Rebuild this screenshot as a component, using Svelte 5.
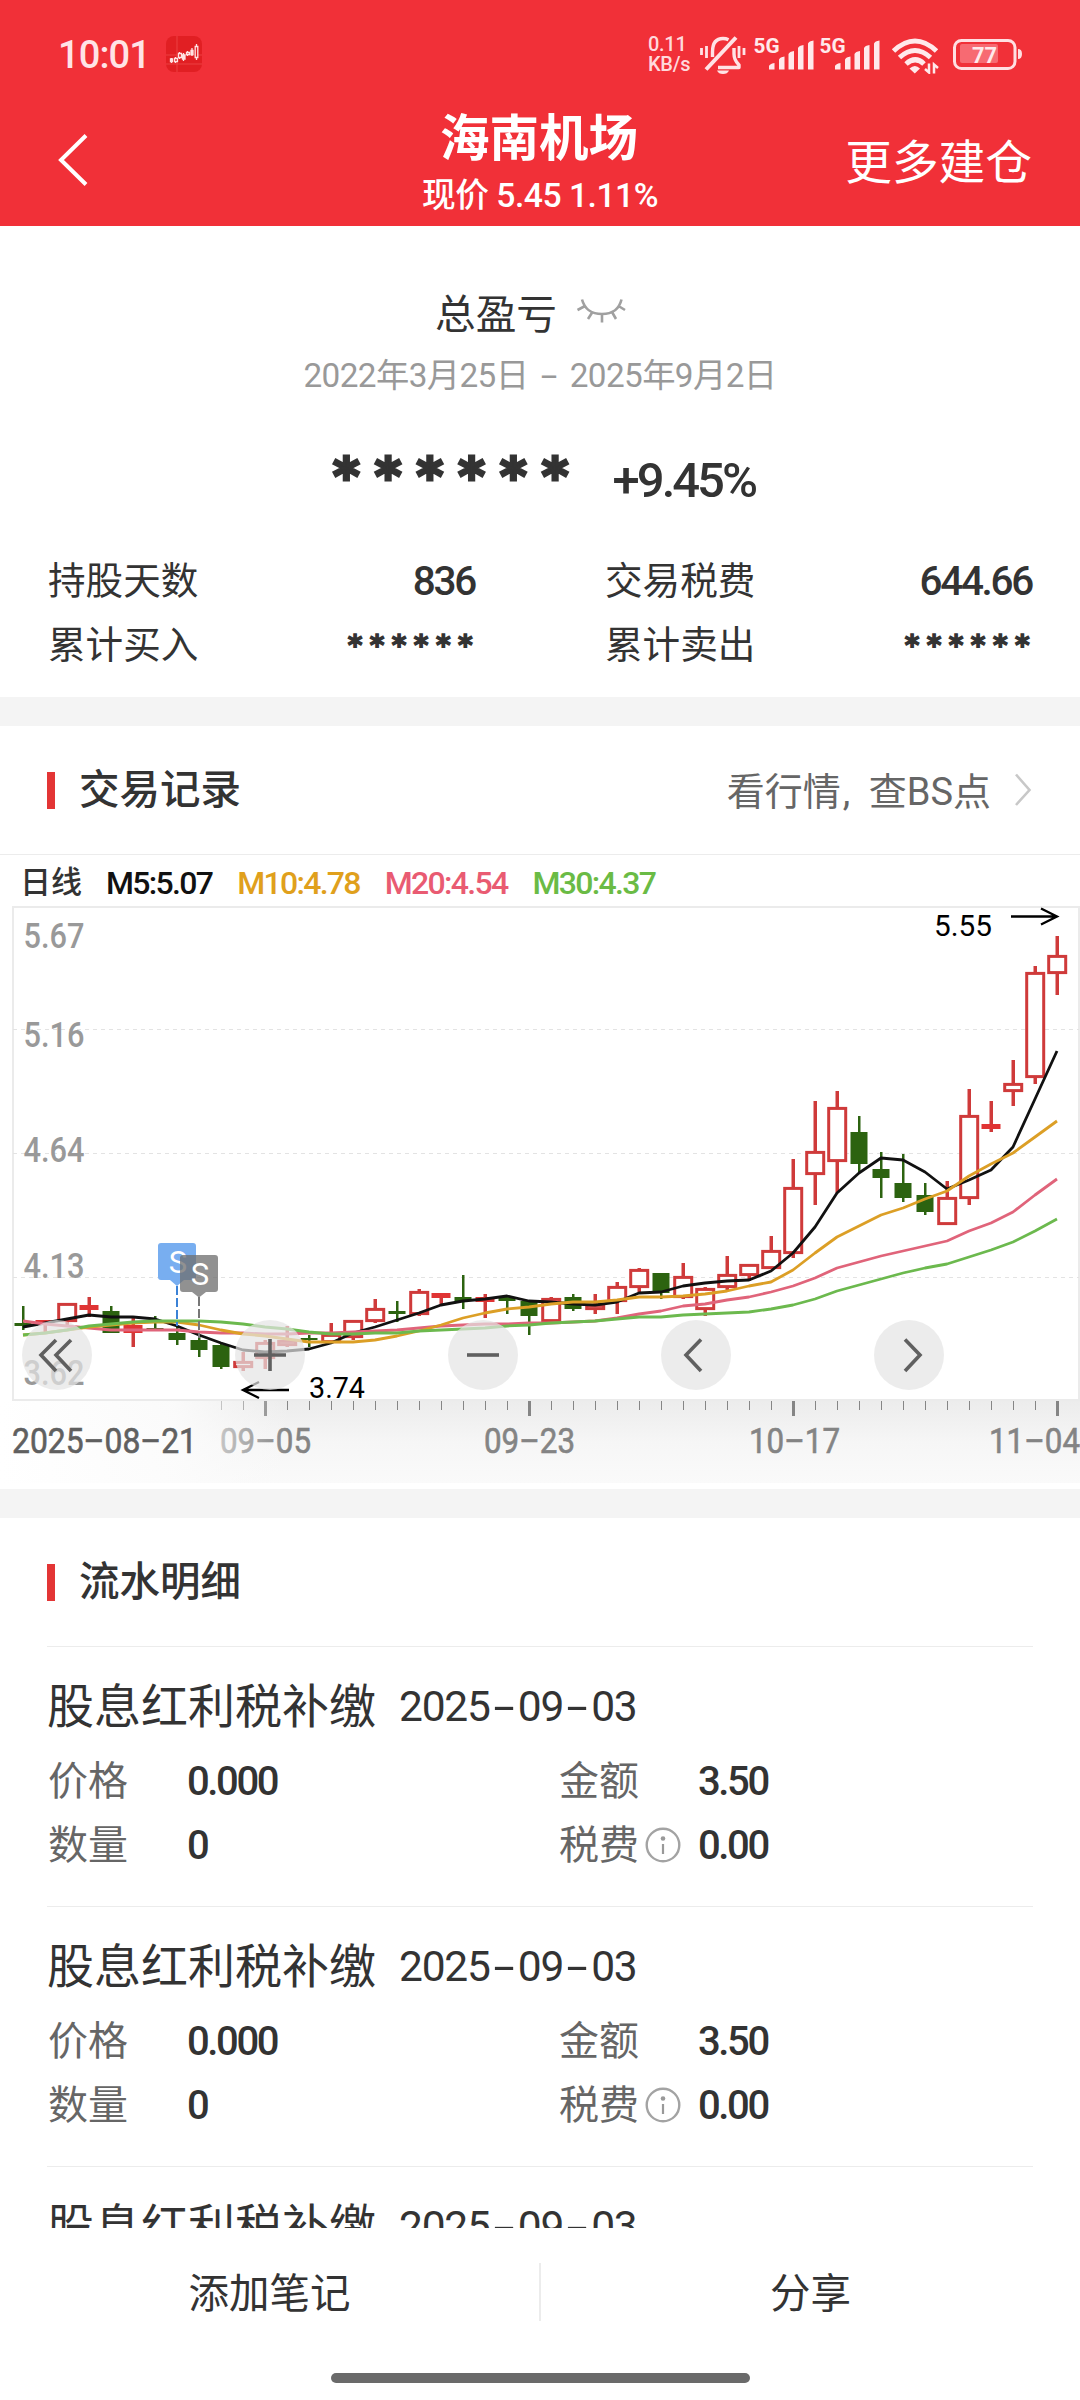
<script>
  const stats = [
    ['持股天数', '836', false],
    ['交易税费', '644.66', false],
    ['累计买入', '******', true],
    ['累计卖出', '******', true]
  ];

  const legend = [
    ['M5:5.07', 'm5'],
    ['M10:4.78', 'm10'],
    ['M20:4.54', 'm20'],
    ['M30:4.37', 'm30']
  ];

  const records = [0, 1, 2].map((id) => ({
    id, name: '股息红利税补缴', date: '2025-09-03', price: '0.000', amount: '3.50', count: '0', fee: '0.00'
  }));

  const STEP = 22;
  const FIRST = 23;
  const at = (i) => FIRST + i * STEP;

  // kind (r hollow rise, f filled rise, g fall), wick top, wick bottom, body top, body bottom
  const candles = [
    ['g', 1306, 1330, 1323, 1326], ['r', 1320, 1332, 1320, 1323], ['r', 1303, 1325, 1303, 1322],
    ['f', 1297, 1317, 1305, 1310], ['g', 1306, 1333, 1311, 1333], ['f', 1318, 1347, 1325, 1333],
    ['g', 1316, 1328, 1328, 1330], ['g', 1327, 1345, 1333, 1340], ['g', 1337, 1357, 1340, 1350],
    ['g', 1343, 1369, 1345, 1367], ['r', 1352, 1371, 1361, 1368], ['r', 1340, 1369, 1342, 1359],
    ['r', 1326, 1347, 1340, 1346], ['g', 1335, 1347, 1338, 1340], ['r', 1323, 1343, 1334, 1343],
    ['r', 1321, 1340, 1320, 1338], ['r', 1299, 1323, 1308, 1322], ['g', 1301, 1322, 1311, 1314],
    ['r', 1289, 1316, 1291, 1315], ['f', 1293, 1305, 1293, 1298], ['g', 1275, 1309, 1297, 1301],
    ['f', 1294, 1318, 1297, 1302], ['g', 1295, 1314, 1297, 1301], ['g', 1300, 1335, 1301, 1316],
    ['r', 1297, 1322, 1298, 1322], ['g', 1294, 1311, 1297, 1309], ['r', 1294, 1314, 1304, 1310],
    ['r', 1282, 1314, 1286, 1302], ['r', 1268, 1292, 1269, 1288], ['g', 1273, 1299, 1273, 1293],
    ['r', 1263, 1299, 1276, 1298], ['r', 1287, 1316, 1288, 1310], ['r', 1256, 1290, 1274, 1288],
    ['r', 1264, 1281, 1264, 1276], ['r', 1236, 1269, 1250, 1269], ['r', 1159, 1258, 1187, 1254],
    ['r', 1101, 1205, 1151, 1175], ['r', 1091, 1193, 1107, 1162], ['g', 1116, 1172, 1132, 1164],
    ['g', 1152, 1198, 1169, 1178], ['g', 1154, 1202, 1183, 1198], ['g', 1183, 1215, 1195, 1212],
    ['r', 1181, 1225, 1197, 1225], ['r', 1089, 1205, 1115, 1199], ['f', 1101, 1132, 1124, 1129],
    ['r', 1060, 1106, 1083, 1092], ['r', 966, 1084, 972, 1078], ['r', 936, 995, 955, 974]
  ];

  const averages = [
    ['m5', [1327, 1323, 1319, 1315, 1317, 1317, 1319, 1326, 1335, 1343, 1350, 1352, 1351, 1349, 1343, 1333, 1327, 1320, 1313, 1305, 1301, 1299, 1296, 1301, 1302, 1304, 1305, 1302, 1293, 1292, 1286, 1283, 1281, 1280, 1271, 1253, 1227, 1193, 1173, 1158, 1160, 1172, 1189, 1180, 1170, 1147, 1099, 1051]],
    ['m20', [1321, 1324, 1326, 1328, 1330, 1330, 1330, 1330, 1332, 1333, 1333, 1334, 1334, 1333, 1333, 1332, 1331, 1330, 1328, 1326, 1325, 1324, 1324, 1323, 1323, 1322, 1321, 1318, 1314, 1311, 1306, 1304, 1300, 1297, 1292, 1286, 1278, 1268, 1262, 1256, 1251, 1246, 1241, 1231, 1223, 1212, 1195, 1179]],
    ['m10', [1335, 1333, 1330, 1327, 1325, 1323, 1322, 1322, 1325, 1330, 1334, 1336, 1339, 1342, 1342, 1342, 1340, 1336, 1331, 1325, 1318, 1313, 1309, 1307, 1304, 1302, 1302, 1300, 1297, 1297, 1296, 1294, 1291, 1286, 1282, 1270, 1253, 1237, 1226, 1215, 1208, 1199, 1191, 1176, 1164, 1153, 1137, 1121]],
    ['m30', [1335, 1333, 1330, 1326, 1324, 1322, 1321, 1321, 1321, 1322, 1324, 1327, 1329, 1332, 1334, 1334, 1333, 1333, 1331, 1330, 1329, 1328, 1326, 1325, 1323, 1322, 1321, 1319, 1317, 1317, 1315, 1314, 1313, 1312, 1309, 1305, 1299, 1291, 1285, 1279, 1273, 1268, 1264, 1257, 1250, 1242, 1231, 1219]]
  ];

  const line = (ys) => ys.map((y, i) => `${at(i)},${y}`).join(' ');

  const scale = [['5.67', 948], ['5.16', 1047], ['4.64', 1162], ['4.13', 1278], ['3.62', 1385]];
  const grid = [1029.5, 1153.5, 1277.5];
  const ticks = Array.from({ length: 39 }, (_, i) => i + 9);
  const dates = [['09–05', 220], ['09–23', 484], ['10–17', 749], ['11–04', 989]];
</script>

{#snippet dashed(text)}{#each text.split('-') as part, i}{#if i}<i class="dash">-</i>{/if}{part}{/each}{/snippet}

{#snippet signal()}
  <svg class="signal" width="62" height="40" viewBox="752 34 62 40">
    <text x="753.5" y="52.5" class="gen" textLength="26" lengthAdjust="spacingAndGlyphs">5G</text>
    <path d="M769 69.500v-3q0-2.500 5.500-3.500v6.500zM779 69.500V59.500q1-2.500 5.500-3v13zM788.500 69.500V54q1-2.500 5.500-3v18.500zM798 69.500V48q1-2.500 5.500-3v24.500zM808 69.500V43.500q1-2.500 5.500-3v29z" />
  </svg>
{/snippet}

<div class="page">
  <header>
    <div class="status">
      <span class="clock">10:01</span>
      <svg class="app" width="36" height="36" viewBox="0 0 36 36">
        <rect width="36" height="36" rx="8" fill="#e11f23" />
        <path d="M0 19h36M11 0v36M0 28h36" stroke="#ef4a4a" stroke-width=".8" />
        <g stroke="#ffe3e3" stroke-width="1.300" fill="none">
          <path d="M5.500 22v5M9.500 21v6M13.500 16v7M17.500 17v8M21.500 15v5M26 12v8M30.500 8v16" />
          <path d="M8.500 22.500h3v3h-3zM12.500 17.500h3v4h-3zM20.500 16.500h3v2h-3zM29.200 10.500h2.600v11h-2.600z" fill="#e11f23" />
          <path d="M4.500 23h2v2.500h-2zM16.500 19h2.500v4h-2.500zM25 14.500h2v4h-2z" fill="#ffe3e3" />
        </g>
      </svg>
      <span class="net"><span>0.11</span><span>KB/s</span></span>
      <svg class="bell" width="50" height="42" viewBox="698 33 50 42">
        <g fill="none" stroke="#ffe3e6" stroke-width="3.400" stroke-linejoin="round">
          <path d="M736 37.500 706 69.500" stroke-width="4" />
          <path d="M712.500 57V52q0-13.500 10.500-13.500 3 0 5.500 1.300" />
          <path d="M734 48v6q0 6 5 11v2.500H718" />
          <path d="M701.500 48v7M706.500 46v12M739 46v12M744 48v7" stroke-width="2.800" />
        </g>
        <path d="M717 70.500h12q-1.500 3.500-6 3.500t-6-3.500z" fill="#ffe3e6" />
      </svg>
      {@render signal()}
      <span class="second">{@render signal()}</span>
      <svg class="wifi" width="50" height="40" viewBox="890 34 50 40">
        <g fill="none" stroke="#ffe9eb" stroke-width="5">
          <path d="M893.500 51q21.500-20 43 0" />
          <path d="M899.500 57.500q15.500-14 31 0" />
          <path d="M906 64q9.500-8.500 18 0" />
        </g>
        <path d="M909.500 68.500q5.500-5 10.500 0l-5.200 5z" fill="#ffe9eb" />
        <path d="M929 63.500v9l-4-3.500M934 73.500v-9l4 3.500" fill="none" stroke="#ffe9eb" stroke-width="2.500" />
      </svg>
      <svg class="battery" width="71" height="34" viewBox="952 37 71 34">
        <rect x="954.500" y="40.500" width="60.500" height="28" rx="7" fill="none" stroke="#ffdfe2" stroke-width="3" />
        <rect x="960" y="44" width="38" height="19" rx="2" fill="#f76a72" />
        <path d="M1018 49q4 0 4 5t-4 5z" fill="#ffdfe2" />
        <text x="972" y="62.500" class="charge" textLength="25" lengthAdjust="spacingAndGlyphs">77</text>
      </svg>
    </div>
    <nav>
      <svg class="back" width="36" height="56" viewBox="55 132 36 56">
        <path d="M86 135.500 61 160l25 24.500" fill="none" stroke="#fff" stroke-width="4" />
      </svg>
      <div class="heading">
        <h1>海南机场</h1>
        <p>现价 5.45 1.11%</p>
      </div>
      <span class="more">更多建仓</span>
    </nav>
  </header>

  <main>
    <section class="summary">
      <div class="total">
        <span>总盈亏</span>
        <svg width="50" height="26" viewBox="577 299 50 26">
          <path d="M582 300.500q4 14.500 20 14.500t19.500-14.500M585 307l-7.500 4M592.500 313l-4.500 7M602 315.500v8M612 313l4 7M618.500 307l6.500 4" fill="none" stroke="#a0a0a0" stroke-width="2.600" />
        </svg>
      </div>
      <p class="range">2022年3月25日 <i class="dash">-</i> 2025年9月2日</p>
      <div class="result">
        <span class="hidden">******</span>
        <span class="rate">+9.45%</span>
      </div>
      <dl class="stats">
        {#each stats as [name, value, masked]}
          <div><dt>{name}</dt><dd class:masked>{value}</dd></div>
        {/each}
      </dl>
    </section>

    <section class="block">
      <div class="head">
        <h2>交易记录</h2>
        <span class="link">看行情<i>,</i>查BS点</span>
        <svg width="18" height="36" viewBox="1015 772 18 36">
          <path d="M1017 774.500 1030.500 790 1017 805" fill="none" stroke="#c8c8c8" stroke-width="2.600" />
        </svg>
      </div>
      <div class="legend">
        <span class="period">日线</span>
        {#each legend as [label, kind]}<span class={kind}>{label}</span>{/each}
      </div>
      <div class="chart">
        <svg width="1080" height="577" viewBox="0 906 1080 577">
          <defs>
            <linearGradient id="axis" x1="0" y1="0" x2="0" y2="1">
              <stop offset="0" stop-color="#ececec" />
              <stop offset=".5" stop-color="#f6f6f6" />
              <stop offset="1" stop-color="#fafafa" />
            </linearGradient>
            <linearGradient id="veil" x1="0" y1="0" x2="1" y2="0">
              <stop offset="0" stop-color="#fff" />
              <stop offset=".6" stop-color="#fcfcfc" stop-opacity=".9" />
              <stop offset="1" stop-color="#fafafa" stop-opacity="0" />
            </linearGradient>
          </defs>
          <rect x="0" y="1401" width="1080" height="82" fill="url(#axis)" />
          <g class="ticks">
            {#each ticks as i}
              {#if (i - 11) % 12 === 0}
                <rect x={at(i) - 1} y="1401" width="3" height="15" />
              {:else}
                <rect x={at(i)} y="1401" width="1" height="9" />
              {/if}
            {/each}
          </g>
          {#each dates as [label, x]}
            <text {x} y="1453" class="day" textLength="91" lengthAdjust="spacingAndGlyphs">{label}</text>
          {/each}
          <rect x="0" y="1401" width="290" height="82" fill="url(#veil)" />
          <text x="12" y="1453" class="day origin" textLength="185" lengthAdjust="spacingAndGlyphs">2025–08–21</text>

          <rect x="13" y="907" width="1066" height="493" class="frame" />
          {#each grid as y}<path d="M13 {y}H1079" class="gridline" />{/each}
          {#each scale as [label, y]}
            <text x="23.500" {y} class="price" textLength="61" lengthAdjust="spacingAndGlyphs">{label}</text>
          {/each}

          {#each candles as [kind, hi, lo, top, bottom], i}
            {@const x = at(i)}
            {#if kind === 'g'}
              <rect x={x - 1} y={hi} width="2.500" height={lo - hi} class="fall" />
              <rect x={x - 8.500} y={top} width="17" height={bottom - top} class="fall" />
            {:else}
              <rect x={x - 1.500} y={hi} width="3.500" height={Math.max(0, top - hi)} class="rise" />
              <rect x={x - 1.500} y={bottom} width="3.500" height={Math.max(0, lo - bottom)} class="rise" />
              {#if kind === 'f' || bottom - top < 4}
                <rect x={x - 9.500} y={top} width="19" height={bottom - top} class="solid" />
              {:else}
                <rect x={x - 8.300} y={top + 1.400} width="17" height={bottom - top - 2.800} class="hollow" />
              {/if}
            {/if}
          {/each}

          {#each averages as [kind, ys]}<polyline points={line(ys)} class="ma {kind}" />{/each}

          <path d="M177 1286v40" stroke="#3b82d6" stroke-width="2" stroke-dasharray="9 3" />
          <path d="M199 1297v41" stroke="#777" stroke-width="2" stroke-dasharray="9 3" />
          <path d="M161 1243h32q3 0 3 3v31q0 3-3 3h-9l-7 6-7-6h-9q-3 0-3-3v-31q0-3 3-3z" fill="#78aef0" />
          <text x="178" y="1273" class="flag">S</text>
          <path d="M183 1255h32q3 0 3 3v31q0 3-3 3h-9l-7 5.500-7-5.500h-9q-3 0-3-3v-31q0-3 3-3z" fill="#6f6f6f" fill-opacity=".76" />
          <text x="200" y="1285" class="flag">S</text>

          <g class="mark">
            <path d="M1011 916.500h45M1041 908.500l16 8-16 8M289 1390h-45M259 1382l-16 8 16 8" />
            <text x="934" y="935.500" textLength="58" lengthAdjust="spacingAndGlyphs">5.55</text>
            <text x="309" y="1398" textLength="56" lengthAdjust="spacingAndGlyphs">3.74</text>
          </g>
        </svg>
        <div class="tools">
          <button aria-label="最早"><svg viewBox="0 0 70 70"><path d="M34 20 19 35l15 16M49 20 34 35l15 16" /></svg></button>
          <button aria-label="放大"><svg viewBox="0 0 70 70"><path d="M19 35h32M35 19v32" /></svg></button>
          <button aria-label="缩小"><svg viewBox="0 0 70 70"><path d="M19 35h32" /></svg></button>
          <button aria-label="前移"><svg viewBox="0 0 70 70"><path d="M40 19.500 25 35l15 16" /></svg></button>
          <button aria-label="后移"><svg viewBox="0 0 70 70"><path d="M31 19.500 46 35 31 51" /></svg></button>
        </div>
      </div>
    </section>

    <section class="block">
      <div class="head"><h2>流水明细</h2></div>
      <ul>
        {#each records as r (r.id)}
          <li>
            <h3>{r.name}<span>{@render dashed(r.date)}</span></h3>
            <div class="fields">
              <span>价格</span><b>{r.price}</b>
              <span>金额</span><b>{r.amount}</b>
              <span>数量</span><b>{r.count}</b>
              <span class="fee">税费
                <svg width="36" height="36" viewBox="0 0 36 36">
                  <circle cx="18" cy="18" r="16.300" fill="none" stroke="#a3a3a3" stroke-width="2.400" />
                  <circle cx="18" cy="11.500" r="2.300" fill="#999" />
                  <path d="M18 17v10" stroke="#999" stroke-width="2.200" />
                </svg>
              </span><b>{r.fee}</b>
            </div>
          </li>
        {/each}
      </ul>
    </section>
  </main>

  <footer>
    <div class="actions"><span>添加笔记</span><hr /><span>分享</span></div>
    <div class="home"></div>
  </footer>
</div>

<style>
  :global(body) { background: #fff; }
  .page {
    width: 1080px; height: 2400px; display: flex; flex-direction: column; overflow: hidden;
    background: #fff; color: #333;
    font-family: Roboto, "Noto Sans CJK SC", sans-serif; font-size: 38px;
  }
  h1, h2, h3, p, dl, dd, ul { margin: 0; padding: 0; }
  svg { display: block; flex: none; }

  header { height: 226px; flex: none; background: #f13038; color: #fff; }
  .status { height: 108px; padding: 0 57px 0 58px; display: flex; align-items: center; }
  .clock { width: 108px; font-size: 38px; font-weight: 500; line-height: 40px; padding-top: 2px; color: #ffe3e6; letter-spacing: -.9px; box-sizing: border-box; }
  .net { margin-left: auto; width: 47px; display: flex; flex-direction: column; font-size: 20px; font-weight: 500; line-height: 20px; letter-spacing: -.3px; color: #ffd9dc; white-space: nowrap; }
  .bell { margin: 0 4px 0 3px; }
  .signal { fill: #ffe9eb; }
  .second { margin-left: 4px; }
  .gen { font-size: 20px; font-weight: 700; }
  .wifi { margin-left: 10px; }
  .battery { margin-left: 12px; }
  .charge { font-size: 22px; font-weight: 700; fill: #ffe9eb; }

  nav { height: 118px; display: grid; grid-template-columns: 300px 1fr 300px; }
  .back { margin: 24px 0 0 55px; }
  .heading { text-align: center; line-height: 58px; }
  h1 { font-size: 49.500px; font-weight: 700; line-height: 62px; margin-right: 2px; }
  .heading p { font-size: 33.700px; font-weight: 500; letter-spacing: -.5px; line-height: 52px; }
  .more { padding-right: 48px; text-align: right; font-size: 46.700px; line-height: 110px; }

  main { flex: 1; min-height: 0; overflow: hidden; }
  .summary { height: 471px; box-sizing: border-box; padding-top: 55px; }
  .total { height: 60px; margin-bottom: 2px; display: flex; justify-content: center; align-items: center; gap: 20px; padding-right: 18px; font-size: 40.700px; }
  .range { line-height: 66px; height: 64px; text-align: center; font-size: 33.300px; letter-spacing: -.6px; color: #999; }
  .dash { display: inline-block; transform: scaleX(1.800); width: 26px; text-align: center; font-style: normal; letter-spacing: 0; }
  .result { height: 72px; margin: 37px 0 33px; display: flex; justify-content: center; gap: 29px; padding-left: 8px; }
  .hidden { font-family: "DejaVu Sans", sans-serif; font-weight: 700; font-size: 51px; line-height: 66px; letter-spacing: 15.100px; -webkit-text-stroke: 3px #333; }
  .rate { font-size: 49px; font-weight: 500; line-height: 73px; letter-spacing: -3px; }
  .stats { display: grid; grid-template-columns: 427px 427px; column-gap: 130px; padding-left: 48px; }
  .stats div { display: flex; justify-content: space-between; line-height: 65px; height: 64px; }
  dt { font-size: 37.600px; }
  dd { font-size: 40.500px; font-weight: 500; letter-spacing: -2.300px; }
  dd.masked { font-family: "DejaVu Sans", sans-serif; font-weight: 700; font-size: 28px; letter-spacing: 7.400px; margin-right: -5px; -webkit-text-stroke: 1.400px #333; }

  .block { border-top: 29px solid #f4f4f4; }
  .head { height: 128px; box-sizing: border-box; padding: 0 48px 0 47px; display: flex; align-items: center; }
  h2 { font-size: 40.500px; font-weight: 500; height: 60px; line-height: 64px; display: flex; align-items: center; }
  h2::before { content: ""; width: 8px; height: 37px; margin-right: 24px; background: #e33535; }
  .link { margin: 0 23px 3px auto; color: #666; font-size: 38px; }
  .link i { display: inline-block; width: 28px; padding-left: 2px; box-sizing: border-box; font-style: normal; }
  .legend { height: 52px; box-sizing: border-box; border-top: 1px solid #ececec; padding-left: 20px; display: flex; gap: 25px; font-size: 32px; font-weight: 500; line-height: 56px; letter-spacing: -1.700px; }
  .period { font-size: 31px; letter-spacing: 0; margin-right: -1px; }
  .legend .m5 { color: #111; } .legend .m10 { color: #e0a01c; } .legend .m20 { color: #e95b72; } .legend .m30 { color: #6abb45; }

  .chart { position: relative; height: 583px; }
  .ticks { fill: #858585; }
  .day { font-size: 35px; fill: #848484; stroke: #848484; stroke-width: .6; }
  .origin { fill: #606060; stroke: #606060; }
  .frame { fill: none; stroke: #ebebeb; stroke-width: 2; }
  .gridline { stroke: #e3e3e3; stroke-width: 1.200; stroke-dasharray: 4 4; }
  .price { font-size: 35px; font-weight: 500; fill: #999; }
  .fall { fill: #2c6310; }
  .rise { fill: #cf3a3a; }
  .solid { fill: #e03434; }
  .hollow { fill: #fff; stroke: #cf3a3a; stroke-width: 3; }
  .ma { fill: none; stroke-width: 2.800; stroke-linejoin: round; }
  .ma.m5 { stroke: #111; } .ma.m10 { stroke: #dc9f26; } .ma.m20 { stroke: #e0647a; } .ma.m30 { stroke: #6cb94e; }
  .flag { fill: #fff; font-size: 31px; text-anchor: middle; }
  .mark { fill: #000; font-size: 29px; }
  .mark path { fill: none; stroke: #000; stroke-width: 2.300; }
  .tools { position: absolute; left: 22px; top: 414px; display: flex; gap: 143px; }
  button { width: 70px; height: 70px; padding: 0; border: 0; border-radius: 50%; background: rgba(228, 228, 228, .7); }
  button svg { fill: none; stroke: #606060; stroke-width: 3.600; }

  ul { list-style: none; padding: 0 47px; }
  li { height: 260px; box-sizing: border-box; border-top: 1px solid #ececec; padding-top: 27px; }
  h3 { font-size: 47px; font-weight: 400; line-height: 66px; margin-bottom: 10px; display: flex; }
  h3 span { margin-left: 23px; font-size: 42.500px; letter-spacing: -1.200px; }
  h3 .dash { width: 28px; }
  .fields { display: grid; grid-template-columns: 139px 372px 139px 1fr; line-height: 64px; font-size: 40px; color: #666; padding-left: 1px; }
  .fields b { color: #333; font-weight: 500; letter-spacing: -2.400px; }
  .fee { display: flex; align-items: center; gap: 6px; }
  .fee svg { margin-bottom: 3px; }

  footer { height: 172px; flex: none; background: #fff; }
  .actions { height: 128px; display: grid; grid-template-columns: 1fr 2px 1fr; align-items: center; text-align: center; font-size: 40.500px; }
  .actions span { padding-bottom: 4px; }
  hr { margin: 0; border: 0; width: 2px; height: 58px; background: #ececec; }
  .home { width: 419px; height: 10px; margin: 17px auto 0; border-radius: 5px; background: #6a6a6a; }
</style>
